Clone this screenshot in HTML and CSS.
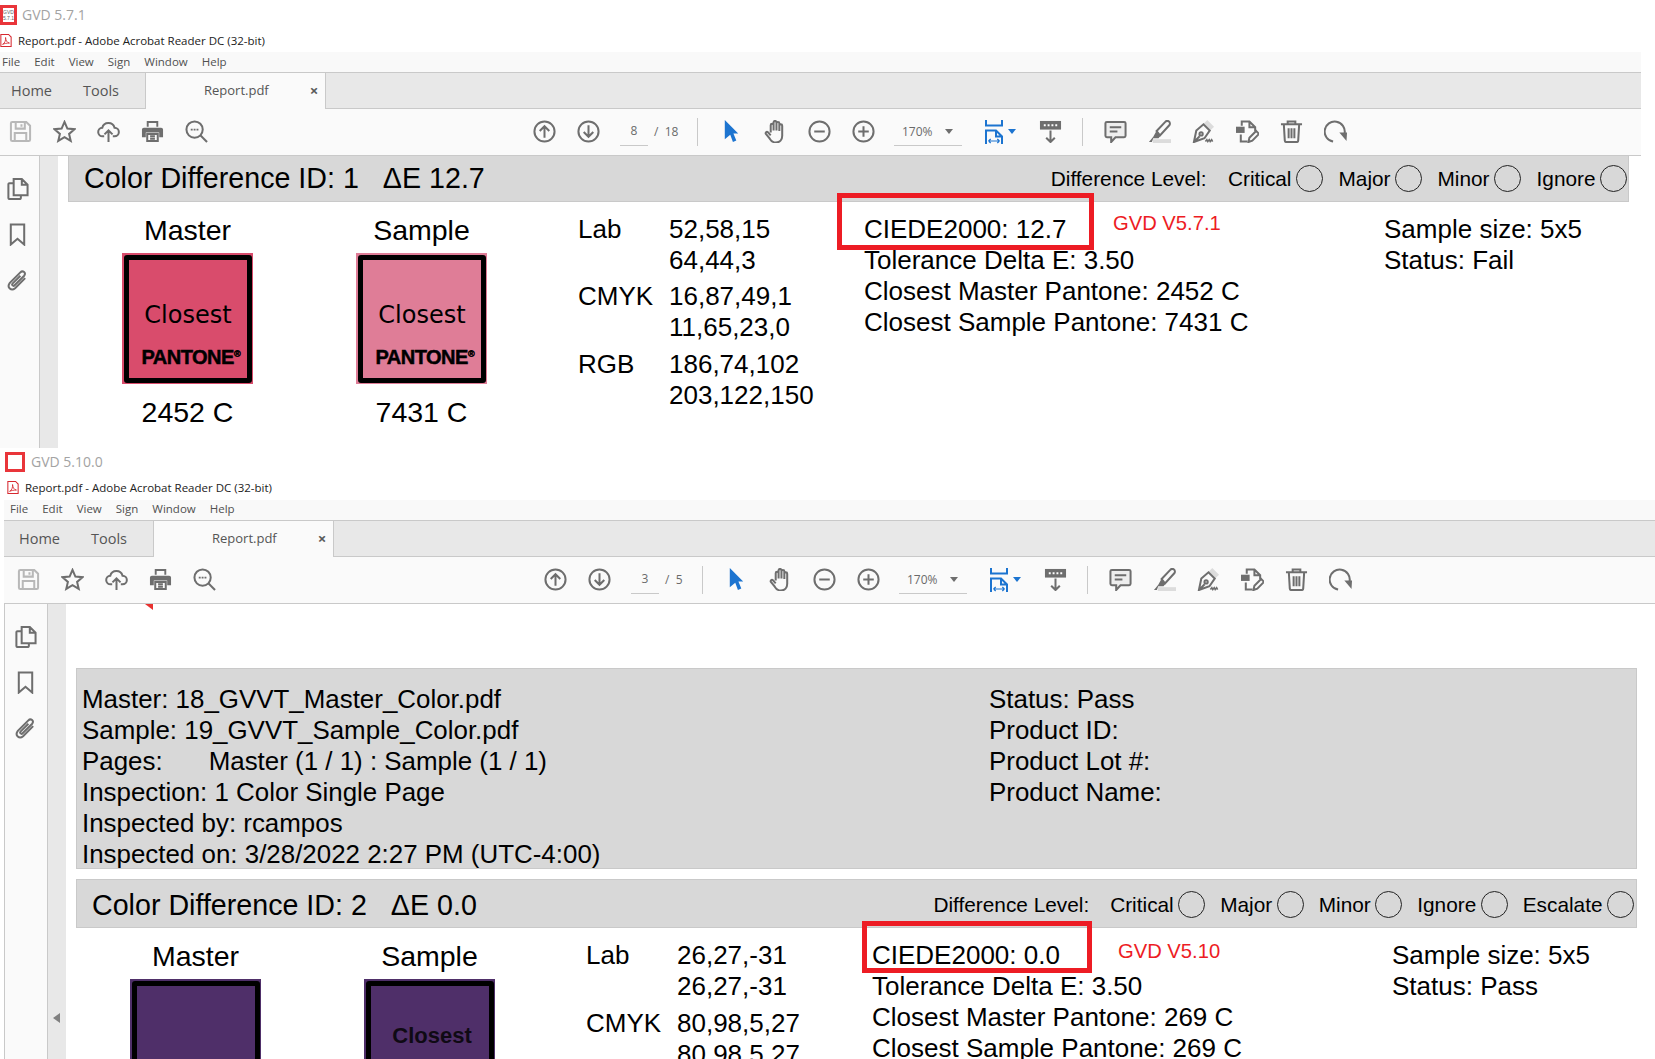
FILE: index.html
```html
<!DOCTYPE html>
<html lang="en">
<head>
    <meta charset="UTF-8">
    <title>GVD Report Comparison</title>
    <link rel="stylesheet" href="styles.css">
</head>
<body>

<svg class="sprite" xmlns="http://www.w3.org/2000/svg">
    <symbol id="i-save" viewBox="0 0 24 24"><path d="M2 3.500a1.500 1.500 0 0 1 1.500-1.500H18l4 4v14.500a1.500 1.500 0 0 1-1.500 1.500h-17A1.500 1.500 0 0 1 2 20.500zM7 2v7h9.500V2M13 4.500v2.500M6 22v-8.500h12V22"/></symbol>
    <symbol id="i-star" viewBox="0 0 24 24"><path d="M12 2l3 6.900 7.400.7-5.600 4.900 1.700 7.300-6.500-3.900-6.500 3.900 1.700-7.300-5.600-4.900 7.400-.7z"/></symbol>
    <symbol id="i-cloud" viewBox="0 0 24 24"><path d="M7.500 17H6a4.500 4.500 0 0 1-.5-9A6.600 6.600 0 0 1 18.300 8a4.500 4.500 0 0 1 0 9h-1.800M12 23V11M7.800 15l4.200-4.200 4.200 4.200"/></symbol>
    <symbol id="i-print" viewBox="0 0 24 24"><path class="solid" d="M6 1h12v6h-2V3H8v4H6zM3 8h18a2 2 0 0 1 2 2v8h-4v-5H5v5H1v-8a2 2 0 0 1 2-2z"/><path d="M6.500 14.500h11v7.500h-11zM9.500 17h5M9.500 19.500h5"/></symbol>
    <symbol id="i-search" viewBox="0 0 24 24"><circle cx="10" cy="10" r="8.500"/><path d="M16 16l7 7"/><path class="dotline" d="M6 10h8"/></symbol>
    <symbol id="i-up" viewBox="0 0 24 24"><circle cx="12" cy="12" r="10.500"/><path d="M12 18.500V6.500M7 11.500l5-5 5 5"/></symbol>
    <symbol id="i-down" viewBox="0 0 24 24"><circle cx="12" cy="12" r="10.500"/><path d="M12 5.500v12M7 12.500l5 5 5-5"/></symbol>
    <symbol id="i-minus" viewBox="0 0 24 24"><circle cx="12" cy="12" r="10.500"/><path d="M6.500 12h11"/></symbol>
    <symbol id="i-plus" viewBox="0 0 24 24"><circle cx="12" cy="12" r="10.500"/><path d="M6.500 12h11M12 6.500v11"/></symbol>
    <symbol id="i-pointer" viewBox="0 0 24 24"><path class="blue-fill" d="M5 0l14 14h-5l3 7.500-3.500 1.500-2.800-7.500L5 20z"/></symbol>
    <symbol id="i-hand" viewBox="0 0 24 24"><path d="M7 13V5.500a1.500 1.500 0 0 1 3 0V11M10 11V2.500a1.500 1.500 0 0 1 3 0V11M13 11V3.500a1.500 1.500 0 0 1 3 0V11M16 11.500V6a1.500 1.500 0 0 1 3 0v10.500c0 4-2.500 7-6.500 7-3.500 0-5-1.500-6.500-4l-4-5c-.8-1.200.8-3 2-1.800L7 16"/></symbol>
    <symbol id="i-fit" viewBox="0 0 18 24"><path class="blue-line" d="M1 0v5.500h16V0M1 24V10.500h10l6 6V24M11 10.500v6h6"/><path class="blue-thin" d="M3.500 21h11M3.500 21l2.200-2M3.500 21l2.200 2M14.500 21l-2.200-2M14.500 21l-2.200 2"/></symbol>
    <symbol id="i-read" viewBox="0 0 24 24"><path class="solid" d="M1 1h22v9H1z"/><path class="dots" d="M5 5.500h2M9 5.500h2M13 5.500h2M17 5.500h2"/><path d="M12 11v12M7.500 18.500L12 23l4.500-4.500"/></symbol>
    <symbol id="i-comment" viewBox="0 0 24 24"><path class="tint" d="M3 2h18a1.500 1.500 0 0 1 1.500 1.500v13A1.500 1.500 0 0 1 21 18h-9l-4.500 5v-5H3a1.500 1.500 0 0 1-1.500-1.500v-13A1.500 1.500 0 0 1 3 2z"/><path d="M6 7.500h12M6 12h8"/></symbol>
    <symbol id="i-highlight" viewBox="0 0 24 24"><path class="pale" d="M5 20h19v4H5z"/><path d="M9 11.500L18 2a2.600 2.600 0 0 1 4.200 3.500L12.500 16z"/><path class="solid" d="M8.500 12l4.500 4.500-2 2.500H5.500L4 23H1l4.500-5.500z"/></symbol>
    <symbol id="i-sign" viewBox="0 0 24 24"><path class="pale" d="M12 4l4-4 7 7-4 4z"/><path d="M2 23l2.500-12L12 4.500l6.500 6.500L13 19zM2 23l6-6"/><circle cx="9.500" cy="14.500" r="1.700"/><path class="squiggle" d="M14 22.500l1.500-2 1 2 1.500-2 1 2 1.500-2 1 2"/></symbol>
    <symbol id="i-export" viewBox="0 0 24 24"><path d="M6 6V1.500h8l6 6v4M14 1.500v6h6M5 15v7.500h7"/><path class="solid" d="M0 7h9v6.500H0z"/><path d="M13 23l1-4.500 7-7 3 3-7 7z"/></symbol>
    <symbol id="i-trash" viewBox="0 0 24 24"><path d="M1 4.500h22M8 4.500V1.500h8v3M4 4.500l1 17a1.500 1.500 0 0 0 1.500 1.500h11a1.500 1.500 0 0 0 1.500-1.500l1-17M9 8.500v10.500M12 8.500v10.500M15 8.500v10.500"/></symbol>
    <symbol id="i-rotate" viewBox="0 0 24 24"><path d="M9.500 22.500A10.500 10.500 0 1 1 21.500 14"/><path class="solid" d="M16 13h8l-.5 9z"/></symbol>
    <symbol id="i-pages" viewBox="0 0 24 24"><path d="M8 2h8.500l6 6v11H8zM16.500 2v6h6M8 6.500H3.500a1 1 0 0 0-1 1V22a1 1 0 0 0 1 1h11a1 1 0 0 0 1-1v-3"/></symbol>
    <symbol id="i-bookmark" viewBox="0 0 24 24"><path d="M5 1.500h14v21l-7-6-7 6z"/></symbol>
    <symbol id="i-clip" viewBox="0 0 24 24"><path d="M20 9.500L9.500 20c-4 3.500-9-1-5.500-5.500L15 3.500c2.500-2.500 6.500.5 4 3.500L9 17c-1.500 1.500-3.500-.5-2-2l8-8"/></symbol>
    <symbol id="i-acrobat" viewBox="0 0 14 16"><path class="red-line" d="M1 1h9l3 3v11H1z"/><path class="red-line thin" d="M3 12.500c2.500-1 4-5 3.500-8 0 3 1.500 6 4.500 6.500-3 0-6 .5-8 1.500z"/></symbol>
</svg>

<section class="window window-a">
    <div class="app-row">
        <span class="app-logo"><span class="app-logo-text">GVD<br>5.7.1</span></span>
        <span class="app-name">GVD 5.7.1</span>
    </div>
    <div class="title-row">
        <svg class="acrobat"><use href="#i-acrobat"/></svg>
        <span>Report.pdf - Adobe Acrobat Reader DC (32-bit)</span>
    </div>
    <nav class="menu-bar">
        <span>File</span><span>Edit</span><span>View</span><span>Sign</span><span>Window</span><span>Help</span>
    </nav>
    <div class="tab-bar">
        <span class="tab-link tab-home">Home</span>
        <span class="tab-link tab-tools">Tools</span>
        <div class="tab-doc"><span>Report.pdf</span><b class="tab-close">×</b></div>
    </div>
    <div class="toolbar">
        <div class="tool muted"><svg><use href="#i-save"/></svg></div>
        <div class="tool"><svg><use href="#i-star"/></svg></div>
        <div class="tool"><svg><use href="#i-cloud"/></svg></div>
        <div class="tool"><svg><use href="#i-print"/></svg></div>
        <div class="tool"><svg><use href="#i-search"/></svg></div>
        <div class="tool nav-start"><svg><use href="#i-up"/></svg></div>
        <div class="tool"><svg><use href="#i-down"/></svg></div>
        <div class="page-box"><span class="page-now">8</span><span class="page-total">/&nbsp; 18</span></div>
        <div class="tool-sep"></div>
        <div class="tool pointer-tool"><svg><use href="#i-pointer"/></svg></div>
        <div class="tool"><svg><use href="#i-hand"/></svg></div>
        <div class="tool"><svg><use href="#i-minus"/></svg></div>
        <div class="tool"><svg><use href="#i-plus"/></svg></div>
        <div class="zoom-box"><span>170%</span><i class="caret"></i></div>
        <div class="fit-tool"><svg><use href="#i-fit"/></svg><i class="caret caret-blue"></i></div>
        <div class="tool read-tool"><svg><use href="#i-read"/></svg></div>
        <div class="tool-sep sep-right"></div>
        <div class="tool comment-tool"><svg><use href="#i-comment"/></svg></div>
        <div class="tool"><svg><use href="#i-highlight"/></svg></div>
        <div class="tool"><svg><use href="#i-sign"/></svg></div>
        <div class="tool"><svg><use href="#i-export"/></svg></div>
        <div class="tool"><svg><use href="#i-trash"/></svg></div>
        <div class="tool"><svg><use href="#i-rotate"/></svg></div>
    </div>
    <div class="doc-area">
        <aside class="side-panel">
            <svg><use href="#i-pages"/></svg>
            <svg><use href="#i-bookmark"/></svg>
            <svg><use href="#i-clip"/></svg>
        </aside>
        <div class="gutter"></div>
        <main class="page">
            <div class="diff-head">
                <h2>Color Difference ID: 1<span class="delta">ΔE 12.7</span></h2>
                <div class="levels">
                    <span class="level-title">Difference Level:</span>
                    <span class="level">Critical<i class="radio"></i></span>
                    <span class="level">Major<i class="radio"></i></span>
                    <span class="level">Minor<i class="radio"></i></span>
                    <span class="level">Ignore<i class="radio"></i></span>
                </div>
            </div>
            <div class="diff-body">
                <div class="swatch-col">
                    <div class="swatch-name">Master</div>
                    <div class="swatch swatch-master">
                        <div class="swatch-inner"><span class="closest">Closest</span><span class="pantone">PANTONE<sup>®</sup></span></div>
                    </div>
                    <div class="swatch-code">2452 C</div>
                </div>
                <div class="swatch-col">
                    <div class="swatch-name">Sample</div>
                    <div class="swatch swatch-sample">
                        <div class="swatch-inner"><span class="closest">Closest</span><span class="pantone">PANTONE<sup>®</sup></span></div>
                    </div>
                    <div class="swatch-code">7431 C</div>
                </div>
                <dl class="values">
                    <dt>Lab</dt><dd>52,58,15<br>64,44,3</dd>
                    <dt>CMYK</dt><dd>16,87,49,1<br>11,65,23,0</dd>
                    <dt class="rgb-row">RGB</dt><dd class="rgb-row">186,74,102<br>203,122,150</dd>
                </dl>
                <div class="metrics">
                    CIEDE2000: 12.7<br>
                    Tolerance Delta E: 3.50<br>
                    Closest Master Pantone: 2452 C<br>
                    Closest Sample Pantone: 7431 C
                </div>
                <div class="version-note">GVD V5.7.1</div>
                <div class="sample-info">Sample size: 5x5<br>Status: Fail</div>
                <div class="red-box"></div>
            </div>
        </main>
    </div>
</section>

<section class="window window-b">
    <div class="app-row">
        <span class="app-logo"></span>
        <span class="app-name">GVD 5.10.0</span>
    </div>
    <div class="title-row">
        <svg class="acrobat"><use href="#i-acrobat"/></svg>
        <span>Report.pdf - Adobe Acrobat Reader DC (32-bit)</span>
    </div>
    <nav class="menu-bar">
        <span>File</span><span>Edit</span><span>View</span><span>Sign</span><span>Window</span><span>Help</span>
    </nav>
    <div class="tab-bar">
        <span class="tab-link tab-home">Home</span>
        <span class="tab-link tab-tools">Tools</span>
        <div class="tab-doc"><span>Report.pdf</span><b class="tab-close">×</b></div>
    </div>
    <div class="toolbar">
        <div class="tool muted"><svg><use href="#i-save"/></svg></div>
        <div class="tool"><svg><use href="#i-star"/></svg></div>
        <div class="tool"><svg><use href="#i-cloud"/></svg></div>
        <div class="tool"><svg><use href="#i-print"/></svg></div>
        <div class="tool"><svg><use href="#i-search"/></svg></div>
        <div class="tool nav-start"><svg><use href="#i-up"/></svg></div>
        <div class="tool"><svg><use href="#i-down"/></svg></div>
        <div class="page-box"><span class="page-now">3</span><span class="page-total">/&nbsp; 5</span></div>
        <div class="tool-sep"></div>
        <div class="tool pointer-tool"><svg><use href="#i-pointer"/></svg></div>
        <div class="tool"><svg><use href="#i-hand"/></svg></div>
        <div class="tool"><svg><use href="#i-minus"/></svg></div>
        <div class="tool"><svg><use href="#i-plus"/></svg></div>
        <div class="zoom-box"><span>170%</span><i class="caret"></i></div>
        <div class="fit-tool"><svg><use href="#i-fit"/></svg><i class="caret caret-blue"></i></div>
        <div class="tool read-tool"><svg><use href="#i-read"/></svg></div>
        <div class="tool-sep sep-right"></div>
        <div class="tool comment-tool"><svg><use href="#i-comment"/></svg></div>
        <div class="tool"><svg><use href="#i-highlight"/></svg></div>
        <div class="tool"><svg><use href="#i-sign"/></svg></div>
        <div class="tool"><svg><use href="#i-export"/></svg></div>
        <div class="tool"><svg><use href="#i-trash"/></svg></div>
        <div class="tool"><svg><use href="#i-rotate"/></svg></div>
    </div>
    <div class="doc-area">
        <aside class="side-panel">
            <svg><use href="#i-pages"/></svg>
            <svg><use href="#i-bookmark"/></svg>
            <svg><use href="#i-clip"/></svg>
        </aside>
        <div class="gutter"><i class="collapse"></i></div>
        <main class="page">
            <i class="page-marker"></i>
            <div class="report-info">
                <div>
                    Master: 18_GVVT_Master_Color.pdf<br>
                    Sample: 19_GVVT_Sample_Color.pdf<br>
                    Pages:<span class="pages-value">Master (1 / 1) : Sample (1 / 1)</span><br>
                    Inspection: 1 Color Single Page<br>
                    Inspected by: rcampos<br>
                    Inspected on: 3/28/2022 2:27 PM (UTC-4:00)
                </div>
                <div>
                    Status: Pass<br>
                    Product ID:<br>
                    Product Lot #:<br>
                    Product Name:
                </div>
            </div>
            <div class="diff-head">
                <h2>Color Difference ID: 2<span class="delta">ΔE 0.0</span></h2>
                <div class="levels">
                    <span class="level-title">Difference Level:</span>
                    <span class="level">Critical<i class="radio"></i></span>
                    <span class="level">Major<i class="radio"></i></span>
                    <span class="level">Minor<i class="radio"></i></span>
                    <span class="level">Ignore<i class="radio"></i></span>
                    <span class="level">Escalate<i class="radio"></i></span>
                </div>
            </div>
            <div class="diff-body">
                <div class="swatch-col">
                    <div class="swatch-name">Master</div>
                    <div class="swatch swatch-purple"><div class="swatch-inner"></div></div>
                </div>
                <div class="swatch-col">
                    <div class="swatch-name">Sample</div>
                    <div class="swatch swatch-purple">
                        <div class="swatch-inner"><span class="closest closest-bold">Closest</span></div>
                    </div>
                </div>
                <dl class="values">
                    <dt>Lab</dt><dd>26,27,-31<br>26,27,-31</dd>
                    <dt>CMYK</dt><dd>80,98,5,27<br>80,98,5,27</dd>
                </dl>
                <div class="metrics">
                    CIEDE2000: 0.0<br>
                    Tolerance Delta E: 3.50<br>
                    Closest Master Pantone: 269 C<br>
                    Closest Sample Pantone: 269 C
                </div>
                <div class="version-note">GVD V5.10</div>
                <div class="sample-info">Sample size: 5x5<br>Status: Pass</div>
                <div class="red-box"></div>
            </div>
        </main>
    </div>
</section>

</body>
</html>
```

FILE: styles.css
```css
/* Root colors */
:root {
    --ui-font: "Open Sans", "Noto Sans", sans-serif;
    --doc-font: "Liberation Sans", Arial, sans-serif;
    --panel: #fafafa;
    --line: #c9c9c9;
    --chrome: #e8e8e8;
    --band: #d8d8d8;
    --icon: #6e6e6e;
    --blue: #1c74d0;
    --red: #ed1c24;
}

html, body {
    margin: 0;
    padding: 0;
    background: #ffffff;
}

body {
    height: 1059px;
    overflow: hidden;
    font-family: var(--ui-font);
}

.sprite {
    display: none;
}

/* svg icons */
svg {
    fill: none;
    stroke: var(--icon);
    stroke-width: 2.1;
}

.solid {
    fill: var(--icon);
    stroke: none;
}

.tint {
    fill: #eeeeee;
}

.pale {
    fill: #dcdcdc;
    stroke: none;
}

.dots {
    stroke: #ffffff;
    stroke-width: 2;
}

.dotline {
    stroke-width: 2;
    stroke-dasharray: 2 1;
}

.squiggle {
    stroke-width: 1.6;
}

.blue-fill {
    fill: var(--blue);
    stroke: none;
}

.blue-line {
    stroke: var(--blue);
    stroke-width: 2;
}

.blue-thin {
    stroke: var(--blue);
    stroke-width: 1.2;
}

.red-line {
    stroke: #d7282f;
    stroke-width: 1.2;
}

.red-line.thin {
    stroke-width: 1;
}

/* Windows */
.window {
    overflow: hidden;
}

.window-a {
    --inset: 0px;
    --lift: 2px;
    width: 1641px;
    height: 448px;
}

.window-b {
    --inset: 4px;
    --lift: 4px;
    margin-left: 4px;
    height: 611px;
}

/* Title rows */
.app-row {
    display: flex;
    align-items: center;
    box-sizing: border-box;
    height: 30px;
    padding-left: var(--inset);
    padding-bottom: var(--lift);
    color: #a3a3a3;
    font-size: 14px;
}

.app-logo {
    display: flex;
    align-items: center;
    justify-content: center;
    box-sizing: border-box;
    width: 17px;
    height: 20px;
    margin: 1px 5px 0 0;
    border: 3px solid #e9353a;
}

.window-b .app-logo {
    width: 20px;
    margin-left: -3px;
    margin-right: 6px;
}

.app-logo-text {
    color: #666666;
    font-size: 5px;
    line-height: 6px;
    text-align: center;
    font-family: var(--doc-font);
}

.title-row {
    display: flex;
    align-items: center;
    box-sizing: border-box;
    height: 22px;
    padding-left: var(--inset);
    padding-bottom: var(--lift);
    color: #222222;
    font-size: 11.5px;
}

.acrobat {
    width: 12px;
    height: 15px;
    margin-right: 6px;
    flex: none;
    stroke-width: 1.2;
}

.window-b .acrobat {
    margin-left: -1px;
}

.menu-bar {
    display: flex;
    align-items: center;
    gap: 14px;
    box-sizing: border-box;
    height: 21px;
    padding-left: calc(var(--inset) + 2px);
    padding-bottom: var(--lift);
    background: #f9f9f9;
    border-bottom: 1px solid var(--line);
    color: #505050;
    font-size: 11.5px;
}

.tab-bar {
    display: flex;
    align-items: flex-start;
    height: 35px;
    background: var(--chrome);
    border-bottom: 1px solid var(--line);
    color: #555555;
    font-size: 14.5px;
}

.tab-link {
    align-self: center;
    margin-bottom: 1px;
}

.tab-home {
    width: 42px;
    margin-left: calc(var(--inset) + 11px);
}

.tab-tools {
    width: 62px;
    margin-left: 30px;
}

.tab-doc {
    display: flex;
    align-items: center;
    flex: none;
    box-sizing: border-box;
    width: 181px;
    height: 36px;
    padding: 0 0 2px 58px;
    background: var(--panel);
    border-left: 1px solid var(--line);
    border-right: 1px solid var(--line);
    font-size: 13px;
}

.tab-close {
    margin-left: 41px;
    font-size: 15px;
    color: #5a5a5a;
}

/* Toolbar */
.toolbar {
    display: flex;
    align-items: center;
    box-sizing: border-box;
    height: 47px;
    padding-left: var(--inset);
    padding-bottom: 1px;
    background: var(--panel);
    border-bottom: 1px solid var(--line);
    color: #6a6a6a;
    font-size: 12px;
}

.tool {
    display: flex;
    align-items: center;
    justify-content: center;
    flex: none;
    width: 44px;
    height: 24px;
}

.tool:first-child {
    margin-left: -2px;
}

.tool svg {
    width: 23px;
    height: 23px;
}

.tool.muted svg {
    stroke: #b8b8b8;
}

.nav-start {
    margin-left: 304px;
}

.window-b .nav-start {
    margin-left: 307px;
}

.page-box {
    display: flex;
    align-items: center;
    flex: none;
    height: 28px;
    margin-left: 10px;
}

.page-now {
    width: 28px;
    height: 28px;
    line-height: 26px;
    text-align: center;
    border-bottom: 1px solid var(--line);
    box-sizing: border-box;
}

.page-total {
    width: 43px;
    padding-left: 6px;
    box-sizing: border-box;
}

.window-b .page-total {
    width: 37px;
}

.tool-sep {
    flex: none;
    width: 1px;
    height: 28px;
    margin-left: 6px;
    background: var(--line);
}

.pointer-tool {
    margin-left: 11px;
}

.zoom-box {
    display: flex;
    align-items: center;
    justify-content: space-between;
    flex: none;
    box-sizing: border-box;
    width: 68px;
    height: 28px;
    margin-left: 9px;
    padding: 0 9px 0 8px;
    border-bottom: 1px solid var(--line);
}

.caret {
    width: 0;
    height: 0;
    border-left: 4px solid transparent;
    border-right: 4px solid transparent;
    border-top: 5px solid var(--icon);
}

.caret-blue {
    margin-left: 5px;
    border-top-color: var(--blue);
}

.fit-tool {
    display: flex;
    align-items: center;
    flex: none;
    margin-left: 23px;
}

.fit-tool svg {
    width: 18px;
    height: 24px;
}

.read-tool {
    margin-left: 12px;
}

.sep-right {
    margin-left: 10px;
}

.comment-tool {
    margin-left: 10px;
}

/* Document area */
.doc-area {
    display: flex;
    align-items: stretch;
    height: 600px;
}

.side-panel {
    display: flex;
    flex-direction: column;
    align-items: center;
    gap: 23px;
    box-sizing: border-box;
    flex: none;
    width: 40px;
    margin-left: var(--inset);
    padding: 21px 5px 0 0;
    background: var(--panel);
    border-right: 1px solid var(--line);
}

.window-b .side-panel {
    margin-left: 0;
    width: 44px;
    padding-left: 4px;
    border-left: 1px solid var(--line);
}

.side-panel svg {
    width: 23px;
    height: 23px;
    flex: none;
}

.gutter {
    flex: none;
    width: 18px;
    box-sizing: border-box;
    background: var(--chrome);
}

.window-b .gutter {
    padding-top: 409px;
}

.collapse {
    display: block;
    width: 0;
    height: 0;
    margin-left: 5px;
    border-top: 5px solid transparent;
    border-bottom: 5px solid transparent;
    border-right: 7px solid #808080;
}

.page {
    flex: 1;
    min-width: 0;
    padding: 0 12px 0 10px;
    background: #ffffff;
    color: #000000;
    font-family: var(--doc-font);
    font-size: 26px;
    line-height: 31px;
}

.window-b .page {
    padding-right: 18px;
}

.page-marker {
    display: block;
    width: 8px;
    height: 6px;
    margin-left: 69px;
    background: #e8312f;
    clip-path: polygon(0 0, 100% 0, 100% 100%);
}

/* Report info band */
.report-info {
    display: grid;
    grid-template-columns: 907px 1fr;
    box-sizing: border-box;
    height: 201px;
    margin: 58px 0 10px;
    padding: 15px 5px 0;
    background: var(--band);
    border: 1px solid var(--line);
    font-size: 25.92px;
    white-space: nowrap;
}

.pages-value {
    margin-left: 46px;
}

/* Difference header */
.diff-head {
    display: flex;
    align-items: center;
    justify-content: space-between;
    box-sizing: border-box;
    height: 46px;
    padding: 0 1px 0 15px;
    background: var(--band);
    border: 1px solid var(--line);
    border-top: 0;
}

.window-b .diff-head {
    height: 49px;
    padding: 3px 2px 0 15px;
    border-top: 1px solid var(--line);
}

.diff-head h2 {
    margin: 0;
    font-size: 28.65px;
    font-weight: normal;
    white-space: nowrap;
}

.delta {
    margin-left: 24px;
}

.levels {
    display: flex;
    align-items: center;
    gap: 15.5px;
    font-size: 20.8px;
    white-space: nowrap;
}

.window-b .levels {
    margin-top: -2px;
    gap: 15px;
}

.level-title {
    margin-right: 6px;
}

.level {
    display: flex;
    align-items: center;
    gap: 4.5px;
}

.radio {
    display: block;
    box-sizing: border-box;
    width: 27px;
    height: 27px;
    border: 1px solid #222222;
    border-radius: 50%;
}

/* Difference body */
.diff-body {
    position: relative;
    display: grid;
    grid-template-columns: 234px 222px 286px 249px 271px 1fr;
    padding: 12px 0 0 54px;
}

.swatch-col {
    width: 131px;
    text-align: center;
}

.swatch-name {
    margin-bottom: 7px;
    padding-top: 1px;
    font-size: 28.5px;
}

.swatch {
    box-sizing: border-box;
    width: 131px;
    height: 131px;
    padding: 2px 1px 1px 2px;
}

.swatch-master {
    background: #d94c6c;
}

.swatch-sample {
    background: #df7d97;
}

.swatch-purple {
    background: #4f2f69;
}

.swatch-inner {
    display: flex;
    flex-direction: column;
    align-items: center;
    box-sizing: border-box;
    height: 100%;
    padding-top: 38px;
    border: 5px solid #000000;
    border-radius: 3px;
    color: #000000;
}

.closest {
    font-family: "DejaVu Sans", sans-serif;
    font-size: 24px;
    line-height: 34px;
}

.closest-bold {
    margin: -5px 0 0 4px;
    font-family: var(--doc-font);
    font-size: 22px;
    font-weight: bold;
    color: #0f0a14;
}

.pantone {
    margin-top: 14px;
    padding-left: 6px;
    font-size: 20px;
    font-weight: bold;
    line-height: 22px;
    letter-spacing: -0.5px;
    -webkit-text-stroke: 0.5px #000000;
}

.pantone sup {
    font-size: 9px;
    line-height: 0;
    vertical-align: 7px;
    letter-spacing: 0;
}

.swatch-code {
    margin-top: 13px;
    font-size: 28.5px;
}

.values {
    display: grid;
    grid-template-columns: 91px 1fr;
    grid-auto-rows: min-content;
    row-gap: 5px;
    margin: 0;
}

.window-b .values {
    row-gap: 6px;
}

.values dt,
.values dd {
    margin: 0;
    white-space: nowrap;
}

.values .rgb-row {
    margin-top: 1px;
}

.metrics,
.sample-info {
    white-space: nowrap;
}

.version-note {
    margin-top: -1px;
    color: var(--red);
    font-size: 20.2px;
    line-height: 21px;
}

.window-b .version-note {
    margin: 1px 0 0 -3px;
}

/* Annotation over the report */
.red-box {
    position: absolute;
    left: 769px;
    top: -9px;
    box-sizing: border-box;
    width: 257px;
    height: 57px;
    border: 5px solid var(--red);
}

.window-b .red-box {
    left: 786px;
    top: -7px;
    width: 230px;
    height: 52px;
}
```
